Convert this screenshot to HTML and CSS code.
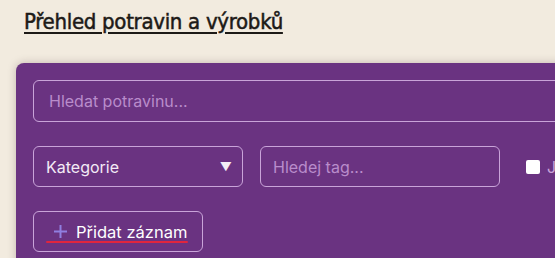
FILE: index.html
```html
<html>
<head>
	<title>Přehled potravin a výrobků</title>
	<meta charset="UTF-8" />
	<link rel="stylesheet" href="styles.css">
</head>
<body>
<h1 class="title">Přehled potravin a výrobků</h1>

<div class="panel">
	<input class="field search" type="text" placeholder="Hledat potravinu...">

	<div class="filters">
		<div class="select">
			<span>Kategorie</span>
			<span class="arrow">&#9660;</span>
		</div>
		<input class="field tag" type="text" placeholder="Hledej tag...">
		<label class="check"><span class="box"></span>Jen oblíbené</label>
	</div>

	<button class="add">
		<svg class="plus" width="15" height="15" viewBox="0 0 15 15"><path d="M7.5 1v13M1 7.5h13" stroke="#8f7fe0" stroke-width="2" fill="none"/></svg>
		<span class="add-label">Přidat záznam</span>
	</button>
</div>
</body>
</html>
```

FILE: styles.css
```css
html, body {
	margin: 0;
	overflow: hidden;
}

body {
	background: #f2ebdf;
	font-family: Inter, "Noto Sans", sans-serif;
	padding: 0 0 0 16px;
}

.title {
	font: normal 22px/1 "DejaVu Sans Condensed", "DejaVu Sans", sans-serif;
	-webkit-text-stroke: 0.5px #1d1a17;
	color: #1d1a17;
	margin: 0 0 0 8px;
	padding: 11px 0 0;
	height: 52px;
	box-sizing: border-box;
	text-decoration: underline;
	text-decoration-thickness: 2px;
	text-underline-offset: 3px;
	letter-spacing: -0.3px;
}

.panel {
	background: #6a3381;
	border-radius: 8px 0 0 0;
	width: 640px;
	height: 240px;
	padding: 17px 17px;
	box-sizing: border-box;
	box-shadow: 0 0 8px rgba(60, 30, 40, 0.25);
	margin-top: 11px;
}

.field {
	display: block;
	box-sizing: border-box;
	height: 42px;
	border: 1px solid #c9a4d9;
	border-radius: 6px;
	background: transparent;
	color: #fff;
	font: 16px Inter, sans-serif;
	padding: 0 15px;
	outline: none;
}

.field::placeholder {
	color: #b98ccb;
}

.search {
	width: 100%;
}

.filters {
	display: flex;
	align-items: center;
	gap: 17px;
	margin-top: 24px;
}

.select {
	flex-shrink: 0;
	width: 210px;
	height: 41px;
	box-sizing: border-box;
	border: 1px solid #c9a4d9;
	border-radius: 6px;
	display: flex;
	align-items: center;
	justify-content: space-between;
	padding: 0 10px 0 12px;
	color: #f3eaf6;
	font-size: 16px;
}

.arrow {
	font-size: 12px;
	color: #f4eef6;
}

.tag {
	flex-shrink: 0;
	width: 240px;
	height: 41px;
	padding: 0 12px;
}

.check {
	display: flex;
	align-items: center;
	gap: 7px;
	margin-left: 9px;
	color: #c9a4d9;
	font-size: 16px;
	white-space: nowrap;
}

.box {
	width: 14px;
	height: 14px;
	background: #fff;
	border-radius: 2px;
}

.add {
	margin-top: 24px;
	height: 41px;
	box-sizing: border-box;
	border: 1px solid #c9a4d9;
	border-radius: 6px;
	background: transparent;
	padding: 0 15px 0 19px;
	display: flex;
	align-items: center;
	gap: 8px;
	font: 16.5px Inter, sans-serif;
	color: #fff;
	position: relative;
}

.plus {
	display: block;
}

.add::after {
	content: "";
	position: absolute;
	left: 12px;
	right: 14px;
	bottom: 8px;
	height: 2px;
	background: #e0253e;
	border-radius: 1px;
}
```
